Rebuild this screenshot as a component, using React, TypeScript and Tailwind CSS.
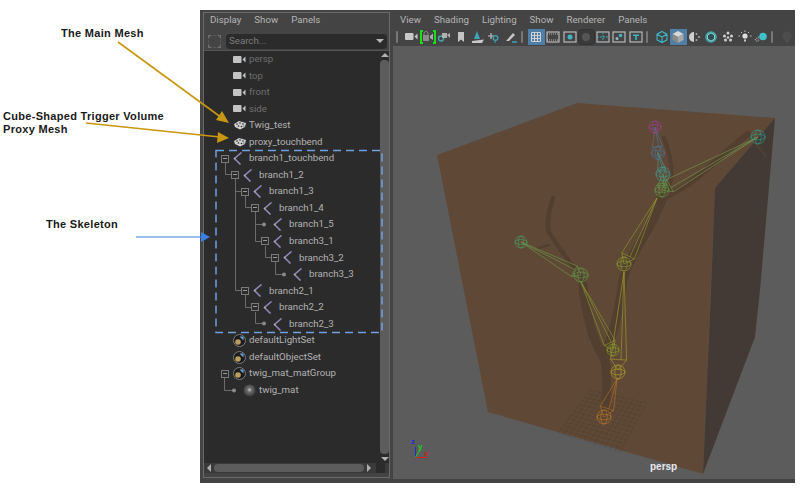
import type { ReactNode } from "react";

type Row = {
    name: string;
    depth: number;
    icon: "camera" | "mesh" | "joint" | "set" | "mat";
    exp?: boolean;
    dim?: boolean;
};

const rows: Row[] = [
    { name: "persp", depth: 0, icon: "camera", dim: true },
    { name: "top", depth: 0, icon: "camera", dim: true },
    { name: "front", depth: 0, icon: "camera", dim: true },
    { name: "side", depth: 0, icon: "camera", dim: true },
    { name: "Twig_test", depth: 0, icon: "mesh" },
    { name: "proxy_touchbend", depth: 0, icon: "mesh" },
    { name: "branch1_touchbend", depth: 0, icon: "joint", exp: true },
    { name: "branch1_2", depth: 1, icon: "joint", exp: true },
    { name: "branch1_3", depth: 2, icon: "joint", exp: true },
    { name: "branch1_4", depth: 3, icon: "joint", exp: true },
    { name: "branch1_5", depth: 4, icon: "joint" },
    { name: "branch3_1", depth: 4, icon: "joint", exp: true },
    { name: "branch3_2", depth: 5, icon: "joint", exp: true },
    { name: "branch3_3", depth: 6, icon: "joint" },
    { name: "branch2_1", depth: 2, icon: "joint", exp: true },
    { name: "branch2_2", depth: 3, icon: "joint", exp: true },
    { name: "branch2_3", depth: 4, icon: "joint" },
    { name: "defaultLightSet", depth: 0, icon: "set" },
    { name: "defaultObjectSet", depth: 0, icon: "set" },
    { name: "twig_mat_matGroup", depth: 0, icon: "set", exp: true },
    { name: "twig_mat", depth: 1, icon: "mat" },
];

const CameraIcon = ({ color = "#c4c4c4" }: { color?: string }) => (
    <svg width="13" height="9" viewBox="0 0 13 9">
        <rect x="0" y="1" width="8.5" height="7" rx="1" fill={color} />
        <path d="M9.5 4.5 L12.5 1.5 V7.5 Z" fill={color} />
    </svg>
);

const MeshIcon = () => (
    <svg width="14" height="10" viewBox="0 0 14 10">
        <path d="M1 4 L6 1 L13 3 L12 7 L7 9.5 L2 7 Z" fill="#d0d0d0" />
        <g fill="#222">
            <circle cx="4" cy="4" r="0.8" />
            <circle cx="7" cy="3" r="0.8" />
            <circle cx="10" cy="4" r="0.8" />
            <circle cx="5.5" cy="6" r="0.8" />
            <circle cx="8.5" cy="6.5" r="0.8" />
            <circle cx="11" cy="6" r="0.6" />
        </g>
    </svg>
);

const JointIcon = () => (
    <svg width="10" height="13" viewBox="0 0 10 13">
        <path d="M8.5 0.5 L1.5 6.5 L7.5 12.5" fill="none" stroke="#9184b8" strokeWidth="1.6" />
        <circle cx="1.8" cy="6.5" r="0.9" fill="#aaa" />
    </svg>
);

const SetIcon = () => (
    <svg width="13" height="13" viewBox="0 0 13 13">
        <circle cx="6.5" cy="6.5" r="6" fill="#1c1c1c" stroke="#7c7c7c" strokeWidth="1" />
        <circle cx="5" cy="8" r="2.8" fill="#b89c60" />
        <path d="M6.5 2.5 L10.5 2.5 L10.5 6.5 Z" fill="#6fa6d8" />
    </svg>
);

const MatIcon = () => (
    <svg width="13" height="13" viewBox="0 0 13 13">
        <defs>
            <radialGradient id="matball" cx="0.5" cy="0.45" r="0.55">
                <stop offset="0" stopColor="#c8c8c8" />
                <stop offset="0.35" stopColor="#6a6a6a" />
                <stop offset="1" stopColor="#3a3a3a" />
            </radialGradient>
        </defs>
        <circle cx="6.5" cy="6.5" r="6" fill="url(#matball)" />
    </svg>
);

const rowIcons = {
    camera: <CameraIcon />,
    mesh: <MeshIcon />,
    joint: <JointIcon />,
    set: <SetIcon />,
    mat: <MatIcon />,
};

const OutlinerRow = ({ row }: { row: Row }) => (
    <div className={`flex h-[16.55px] items-center text-[9.7px] ${row.dim ? "text-[#6e6e6e]" : "text-[#b2b2b2]"}`}>
        <div className="shrink-0" style={{ width: 17 + row.depth * 10 }} />
        <div className="flex w-[10px] shrink-0 items-center">
            {row.exp && (
                <div className="relative h-[8px] w-[8px] border border-[#7a7a7a] bg-[#2c2c2c]">
                    <div className="absolute left-[1px] top-[2px] h-px w-[4px] bg-[#9a9a9a]" />
                </div>
            )}
        </div>
        <div className="flex w-[18px] shrink-0 items-center pl-[2px]">{rowIcons[row.icon]}</div>
        <span>{row.name}</span>
    </div>
);

const Connectors = () => (
    <svg className="absolute left-0 top-0" width="176" height="412" viewBox="204 51 176 412">
        <path
            d="M225.5 163V174.5H231 M235.5 179V290.5H241 M235.5 191.5H241 M245.5 196V207.5H251 M255.5 212V241.5H261 M255.5 224.5H263 M265.5 246V257.5H271 M275.5 262V274.5H283 M245.5 295V307.5H251 M255.5 312V323.5H263 M224.5 378V390.5H233"
            fill="none"
            stroke="#6c6c6c"
        />
        <g fill="#8a8a8a">
            <circle cx="264" cy="224.5" r="2" />
            <circle cx="284" cy="274.5" r="2" />
            <circle cx="264" cy="323.5" r="2" />
            <circle cx="234" cy="390.5" r="2" />
        </g>
    </svg>
);

const Outliner = () => (
    <div className="mb-[5px] flex w-[187px] shrink-0 flex-col border border-[#6a6a6a] bg-[#444444]">
        <div className="flex h-[15px] items-center gap-[13px] pl-[6px] text-[9.7px] text-[#b4b4b4]">
            <span>Display</span>
            <span>Show</span>
            <span>Panels</span>
        </div>
        <div className="mt-[4px] flex h-[18px] items-center pl-[4px] pr-[2px]">
            <svg width="13" height="13" viewBox="0 0 13 13" className="mr-[5px] shrink-0">
                <path d="M0.5 3.5V0.5H3.5 M9.5 0.5H12.5V3.5 M12.5 9.5V12.5H9.5 M3.5 12.5H0.5V9.5" fill="none" stroke="#6e6e6e" strokeWidth="1.4" />
                <path d="M5 0.5H8 M5 12.5H8 M0.5 5V8 M12.5 5V8" stroke="#555" />
            </svg>
            <div className="flex h-[15px] flex-1 items-center justify-between rounded-sm bg-[#2b2b2b] px-[3px] text-[9.7px] text-[#7c7c7c]">
                <span>Search...</span>
                <div className="h-0 w-0 border-x-[4px] border-t-[4px] border-x-transparent border-t-[#b8b8b8]" />
            </div>
        </div>
        <div className="flex h-[413px] border-t border-[#555] bg-[#2b2b2b]">
            <div className="relative flex-1">
                <Connectors />
                <div className="relative">
                    {rows.map((r) => (
                        <OutlinerRow key={r.name} row={r} />
                    ))}
                </div>
            </div>
            <div className="flex w-[9px] shrink-0 flex-col items-center bg-[#2b2b2b]">
                <div className="mt-[2px] h-0 w-0 border-x-[4px] border-b-[4px] border-x-transparent border-b-[#b0b0b0]" />
                <div className="mt-[3px] w-full flex-1 rounded-sm bg-[#5c5c5c]" />
                <div className="mb-[2px] mt-[3px] h-0 w-0 border-x-[4px] border-t-[4px] border-x-transparent border-t-[#b0b0b0]" />
            </div>
        </div>
        <div className="flex h-[10px] items-center bg-[#3a3a3a]">
            <div className="ml-[3px] h-0 w-0 border-y-[4px] border-r-[4px] border-y-transparent border-r-[#b0b0b0]" />
            <div className="ml-[3px] h-[8px] w-[150px] rounded-sm bg-[#5c5c5c]" />
            <div className="ml-[3px] h-0 w-0 border-y-[4px] border-l-[4px] border-y-transparent border-l-[#b0b0b0]" />
            <div className="ml-[5px] h-full w-[9px] bg-[#2b2b2b]" />
        </div>
        <div className="flex-1" />
    </div>
);

const Sep = ({ left = 2 }: { left?: number }) => (
    <div className="mr-[5px] h-[12px] w-[2px] shrink-0 rounded-sm bg-[#777]" style={{ marginLeft: left }} />
);

const Tool = ({ children, active }: { children: ReactNode; active?: boolean }) => (
    <div className={`flex h-[16px] w-[16.6px] shrink-0 items-center justify-center ${active ? "bg-[#4f7fa6]" : ""}`}>{children}</div>
);

const S = ({ children }: { children: ReactNode }) => (
    <svg width="14" height="14" viewBox="0 0 14 14" fill="none">
        {children}
    </svg>
);

const Frame = ({ children }: { children?: ReactNode }) => (
    <S>
        <rect x="1" y="2" width="12" height="10" stroke="#b8b8b8" strokeWidth="1.2" fill="#444" />
        {children}
    </S>
);

const Toolbar = () => (
    <div className="flex h-[19px] items-center">
        <Sep left={3} />
        <Tool>
            <CameraIcon color="#c8c8c8" />
        </Tool>
        <div className="relative flex h-[16px] w-[16.6px] shrink-0 items-center justify-center">
            <S>
                <rect x="2" y="5" width="6" height="6" fill="#8a8a8a" />
                <path d="M3 5V3.5A2 2 0 0 1 7 3.5V5" stroke="#8a8a8a" />
                <path d="M9 6L12 3.5V10L9 8Z" fill="#aaa" />
            </S>
            <div className="absolute left-0 top-[1px] h-[14px] w-[3px] border-y-2 border-l-2 border-[#16e016]" />
            <div className="absolute right-0 top-[1px] h-[14px] w-[3px] border-y-2 border-r-2 border-[#16e016]" />
        </div>
        <Tool>
            <S>
                <circle cx="4" cy="8.5" r="2.5" stroke="#46a6b0" strokeWidth="1.4" />
                <rect x="5" y="3" width="5" height="5" fill="#b0b0b0" />
                <path d="M10 5L13 3V8Z" fill="#b0b0b0" />
            </S>
        </Tool>
        <Tool>
            <S>
                <path d="M4 2H10V12L7 9.5L4 12Z" fill="#c4c4c4" />
            </S>
        </Tool>
        <Tool>
            <S>
                <path d="M6 1L9 9H3Z" fill="#3fa4b8" />
                <path d="M1 11L13 9.5L11 13H1Z" fill="#c8c8c8" />
            </S>
        </Tool>
        <Tool>
            <S>
                <path d="M1 6H7 M4 3V9" stroke="#c0c0c0" strokeWidth="1.2" />
                <circle cx="8.5" cy="8" r="2.3" stroke="#3fa4b8" strokeWidth="1.3" />
                <path d="M8 10.5V13" stroke="#3fa4b8" />
            </S>
        </Tool>
        <Tool>
            <S>
                <path d="M2 11L9 3L11 5L5 11Z" fill="#c4c4c4" />
                <path d="M8 12H13" stroke="#3fa4b8" strokeWidth="1.5" />
            </S>
        </Tool>
        <Sep />
        <Tool active>
            <S>
                <path d="M2.5 2.5H11.5V11.5H2.5Z M5.5 2.5V11.5 M8.5 2.5V11.5 M2.5 5.5H11.5 M2.5 8.5H11.5" stroke="#d0d0d0" />
            </S>
        </Tool>
        <Tool>
            <Frame>
                <path d="M1 4H13 M1 10H13" stroke="#b8b8b8" strokeDasharray="1 1" />
            </Frame>
        </Tool>
        <Tool>
            <Frame>
                <circle cx="7" cy="7" r="2.5" fill="#3fb4c4" />
            </Frame>
        </Tool>
        <div className="flex h-[16px] w-[16.6px] shrink-0 items-center justify-center rounded-sm border border-[#333] bg-[#3a3a3a]">
            <div className="h-[8px] w-[8px] rounded-full bg-[#555]" />
        </div>
        <Tool>
            <Frame>
                <path d="M7 2V12 M1 7H13" stroke="#3fa4b8" strokeDasharray="2 1" />
            </Frame>
        </Tool>
        <Tool>
            <Frame>
                <circle cx="8.5" cy="5.5" r="1.8" fill="#3fb4c4" />
                <circle cx="5" cy="8.5" r="1.5" fill="#8fb8c8" />
            </Frame>
        </Tool>
        <Tool>
            <Frame>
                <path d="M4 4.5H10V6H7.8V10H6.2V6H4Z" fill="#3fb4c4" />
            </Frame>
        </Tool>
        <Sep />
        <Tool>
            <S>
                <path d="M7 1.5L12 4.2V9.8L7 12.5L2 9.8V4.2Z M2 4.2L7 7L12 4.2 M7 7V12.5" stroke="#3fb4c4" strokeWidth="1.1" />
            </S>
        </Tool>
        <Tool active>
            <S>
                <path d="M7 1L12.5 4L7 7L1.5 4Z" fill="#d8d8d8" />
                <path d="M1.5 4L7 7V13L1.5 10Z" fill="#8a8a8a" />
                <path d="M12.5 4L7 7V13L12.5 10Z" fill="#a8a8a8" />
            </S>
        </Tool>
        <Tool>
            <S>
                <path d="M6 2A5 5 0 0 0 6 12Z" fill="#d0d0d0" />
                <circle cx="8.5" cy="4" r="1" fill="#aaa" />
                <circle cx="11" cy="7" r="1" fill="#aaa" />
                <circle cx="8.5" cy="10" r="1" fill="#aaa" />
            </S>
        </Tool>
        <Tool>
            <S>
                <circle cx="7" cy="7" r="5.8" fill="#3fa4a8" />
                <path d="M7 3L10.5 5V9L7 11L3.5 9V5Z" fill="#2f4f55" stroke="#cfe" strokeWidth="0.6" />
            </S>
        </Tool>
        <Tool>
            <S>
                <g fill="#d0d0d0">
                    <circle cx="7" cy="3" r="1.5" />
                    <circle cx="3.5" cy="6" r="1.5" />
                    <circle cx="10.5" cy="6" r="1.5" />
                    <circle cx="7" cy="7.5" r="1.2" />
                    <circle cx="4.5" cy="10" r="1.5" />
                    <circle cx="9.5" cy="10" r="1.5" />
                </g>
            </S>
        </Tool>
        <Tool>
            <S>
                <circle cx="7" cy="6" r="2.6" fill="#e0e0e0" />
                <path d="M6 9.5H8V11.5H6Z" fill="#c8c8c8" />
                <path d="M7 0.5V2 M2 6H0.5 M13.5 6H12 M3 2L4 3 M11 2L10 3" stroke="#c0c0c0" />
            </S>
        </Tool>
        <Tool>
            <S>
                <circle cx="9" cy="6.5" r="3.8" fill="#3fc0cc" />
                <path d="M1 10L5 6.5 M2.5 11.5L6 9" stroke="#a8a8a8" strokeWidth="1.4" strokeDasharray="1 1" />
            </S>
        </Tool>
        <Sep />
        <Tool>
            <S>
                <circle cx="7" cy="6" r="4.5" fill="#4d4d4d" />
                <rect x="5" y="10" width="4" height="2.5" fill="#4d4d4d" />
            </S>
        </Tool>
    </div>
);

// bone from parent joint a to child joint b, drawn as a thin wire pyramid
const Bone = ({ a, b, r, color }: { a: [number, number]; b: [number, number]; r: number; color: string }) => {
    const dx = b[0] - a[0];
    const dy = b[1] - a[1];
    const len = Math.hypot(dx, dy);
    const px = (-dy / len) * r;
    const py = (dx / len) * r;
    const mx = a[0] + (dx / len) * r * 1.3;
    const my = a[1] + (dy / len) * r * 1.3;
    const d = `M${a[0]} ${a[1]} L${mx + px} ${my + py} L${b[0]} ${b[1]} L${mx - px} ${my - py} L${a[0]} ${a[1]} M${mx + px} ${my + py} L${mx - px} ${my - py} M${mx + px * 0.3} ${my + py * 0.3} L${b[0]} ${b[1]}`;
    return <path d={d} fill="none" stroke={color} strokeWidth="0.6" />;
};

const Joint = ({ x, y, r, color }: { x: number; y: number; r: number; color: string }) => (
    <g fill="none" stroke={color} strokeWidth="0.6">
        <circle cx={x} cy={y} r={r} />
        <ellipse cx={x} cy={y} rx={r * 0.45} ry={r} />
        <ellipse cx={x} cy={y} rx={r} ry={r * 0.4} />
    </g>
);

const lerp = (p: number[], q: number[], t: number) => [p[0] + (q[0] - p[0]) * t, p[1] + (q[1] - p[1]) * t];

const gridLines = () => {
    const A = [590, 390];
    const B = [647, 403];
    const C = [620, 452];
    const D = [558, 433];
    const out: string[] = [];
    for (let i = 0; i <= 12; i++) {
        const t = i / 12;
        const p = lerp(A, D, t);
        const q = lerp(B, C, t);
        out.push(`M${p[0]} ${p[1]}L${q[0]} ${q[1]}`);
        const u = lerp(A, B, t);
        const v = lerp(D, C, t);
        out.push(`M${u[0]} ${u[1]}L${v[0]} ${v[1]}`);
    }
    return out.join("");
};

const Scene = () => (
    <svg width="400" height="433" viewBox="393 46 400 433" className="block">
        <path d="M437 155L577 103L775 118L715 188L703 474L488 412Z" fill="#5f4936" />
        <path d="M775 118L760 290L755 337L703 474L711 290L715 188Z" fill="#433a35" />
        <path d={gridLines()} fill="none" stroke="#4f3d2e" strokeWidth="0.6" strokeDasharray="2 1" />
        <path d="M558 433L620 452" stroke="#555c66" strokeWidth="1" />
        <g fill="none" stroke="#523f2f" strokeLinecap="round" strokeLinejoin="round">
            <path d="M606 412C606 385 608 368 604 358C592 340 585 310 583 285" strokeWidth="9" />
            <path d="M604 360C612 335 620 310 622 285C626 262 640 245 652 222C660 205 664 195 668 190" strokeWidth="9" />
            <path d="M660 198C690 190 720 155 748 134" strokeWidth="6" />
            <path d="M668 190C674 175 672 160 664 138" strokeWidth="4" />
            <path d="M748 134L766 156" strokeWidth="2" />
            <path d="M583 280C570 262 556 245 549 232C546 222 549 210 553 198" strokeWidth="4.5" />
            <path d="M549 245L538 248" strokeWidth="2.5" />
        </g>
        <Bone a={[663, 175]} b={[658, 153]} r={4} color="#3f9f96" />
        <Bone a={[658, 153]} b={[655, 127]} r={5} color="#4d7396" />
        <Bone a={[662, 190]} b={[758, 137]} r={7} color="#6fa04a" />
        <Bone a={[662, 192]} b={[663, 175]} r={5} color="#5f9f4a" />
        <Bone a={[624, 264]} b={[657, 198]} r={7} color="#8f9f2a" />
        <Bone a={[581, 275]} b={[521, 242]} r={6} color="#6aa048" />
        <Bone a={[613, 350]} b={[581, 282]} r={6} color="#8aa02a" />
        <Bone a={[618, 370]} b={[624, 272]} r={8} color="#a8a02a" />
        <Bone a={[604, 417]} b={[617, 379]} r={7} color="#b8722a" />
        <Joint x={655} y={127} r={6} color="#a0409a" />
        <Joint x={658} y={153} r={6.5} color="#4d7396" />
        <Joint x={663} y={174} r={7} color="#3f9f96" />
        <Joint x={662} y={190} r={7} color="#5f9f4a" />
        <Joint x={758} y={137} r={7} color="#2f9f8f" />
        <Joint x={624} y={264} r={7} color="#8f9f2a" />
        <Joint x={521} y={242} r={6} color="#4a9f6a" />
        <Joint x={581} y={275} r={7} color="#5fa048" />
        <Joint x={613} y={350} r={6} color="#8aa02a" />
        <Joint x={618} y={372} r={7} color="#b8a52a" />
        <Joint x={604} y={417} r={7} color="#c07a28" />
        <path d="M415.5 457V447" stroke="#2030d0" />
        <path d="M415.5 457.5H427" stroke="#d02020" />
        <path d="M415.5 457L421 449" stroke="#20d020" />
    </svg>
);

const Viewport = () => (
    <div className="ml-[3px] flex min-w-0 flex-1 flex-col">
        <div className="flex h-[15px] items-center gap-[13px] pl-[7px] pt-[2px] text-[9.7px] text-[#b4b4b4]">
            <span>View</span>
            <span>Shading</span>
            <span>Lighting</span>
            <span>Show</span>
            <span>Renderer</span>
            <span>Panels</span>
        </div>
        <Toolbar />
        <div className="relative h-[433px] overflow-hidden bg-[#5c5c5c]">
            <Scene />
            <span className="absolute left-[257px] top-[416px] font-['Liberation_Sans',sans-serif] text-[10px] font-bold leading-none text-[#e8e8e8]">persp</span>
            <span className="absolute left-[18px] top-[392px] font-['Liberation_Sans',sans-serif] text-[8px] font-bold leading-none text-[#2030d0]">z</span>
            <span className="absolute left-[25px] top-[397px] font-['Liberation_Sans',sans-serif] text-[8px] font-bold leading-none text-[#20d020]">y</span>
            <span className="absolute left-[31px] top-[404px] font-['Liberation_Sans',sans-serif] text-[8px] font-bold leading-none text-[#d02020]">x</span>
        </div>
    </div>
);

const Callouts = () => (
    <div className="flex w-[200px] shrink-0 flex-col pl-[3px] pt-[27px] text-[11px] font-bold leading-[13px] tracking-[0.3px] text-[#1a1a1a]">
        <div className="ml-[58px]">The Main Mesh</div>
        <div className="mt-[70px]">
            Cube-Shaped Trigger Volume
            <br />
            Proxy Mesh
        </div>
        <div className="ml-[43px] mt-[82px]">The Skeleton</div>
    </div>
);

const Overlay = () => (
    <svg className="pointer-events-none absolute inset-0" width="800" height="488" viewBox="0 0 800 488">
        <path d="M118 42L222 118" stroke="#c8970f" strokeWidth="1.6" />
        <path d="M229 123L216 120L222 111Z" fill="#c8970f" />
        <path d="M86 123L220 137" stroke="#c8970f" strokeWidth="1.6" />
        <path d="M229 138L217 143L218 132Z" fill="#c8970f" />
        <path d="M136 237H204" stroke="#3b7fe0" strokeWidth="1.2" />
        <path d="M210 237L201 232V242Z" fill="#3b7fe0" />
        <rect x="216" y="150.5" width="166" height="182" fill="none" stroke="#6fa0e0" strokeWidth="1.5" strokeDasharray="8 5" />
    </svg>
);

export default function App() {
    return (
        <div className="relative flex h-[488px] w-[800px] overflow-hidden bg-white font-['Liberation_Sans',sans-serif]">
            <Callouts />
            <div className="mb-[5px] mr-[7px] mt-[10px] flex flex-1 bg-[#444444] pl-[3px] pt-[2px] font-['Roboto',sans-serif]">
                <Outliner />
                <Viewport />
            </div>
            <Overlay />
        </div>
    );
}
